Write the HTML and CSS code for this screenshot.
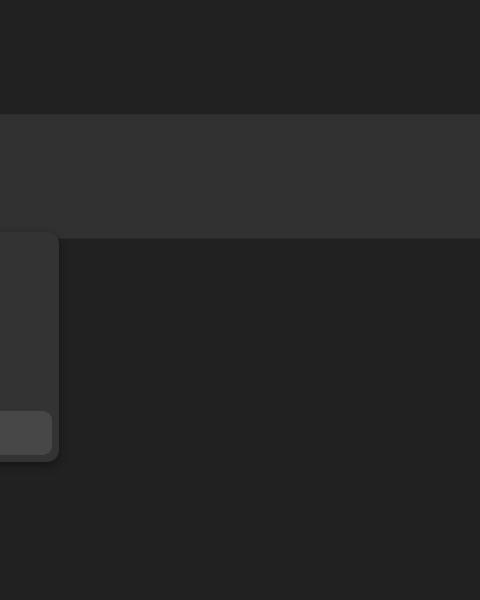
FILE: index.html
```html
<!DOCTYPE html>
<html lang="en">
<head>
  <meta charset="UTF-8">
  <title>Panel</title>
  <meta name="viewport" content="width=device-width, initial-scale=1.0">
  <link rel="stylesheet" href="styles.css">
</head>
<body>
  <div class="top-space"></div>
  <section class="band"></section>
  <div class="popup">
    <div class="popup-body"></div>
    <button class="popup-button"></button>
  </div>
</body>
</html>
```
FILE: styles.css
```css
body {
  font-family: "Liberation Sans", Arial, sans-serif;
  background-color: #212121;
  color: #eee;
  margin: 0;
  padding: 0;
  height: 600px;
  position: relative;
  overflow: hidden;
}
.top-space {
  height: 114px;
}
.band {
  height: 125px;
  background-color: #313131;
  border-top: 1px solid #2d2d2d;
  border-bottom: 1px solid #2a2a2a;
  box-sizing: border-box;
}
.popup {
  position: absolute;
  top: 232px;
  left: -141px;
  width: 200px;
  height: 230px;
  box-sizing: border-box;
  padding: 0 7px 7px 0;
  background-color: #333333;
  border-radius: 12px;
  box-shadow: 0 3px 10px rgba(0,0,0,0.4);
  display: flex;
  flex-direction: column;
}
.popup-body {
  flex: 1;
}
.popup-button {
  height: 44px;
  border: none;
  border-radius: 9px;
  background-color: #474747;
  padding: 0;
}
```
